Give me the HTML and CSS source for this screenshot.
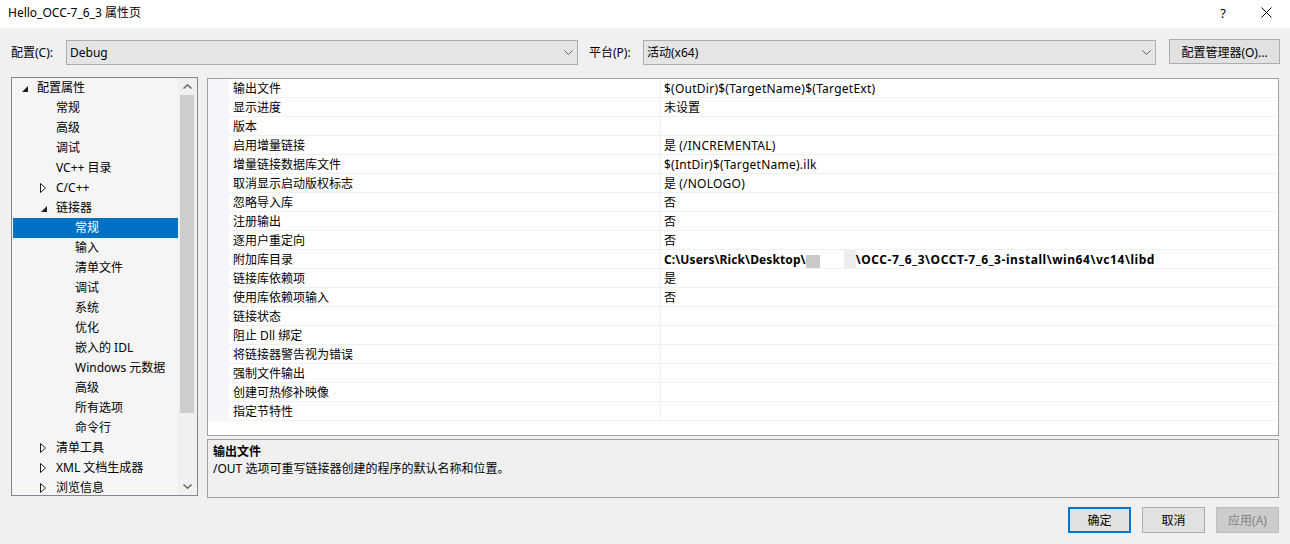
FILE: index.html
```html
<!DOCTYPE html>
<html lang="zh-CN">
<head>
<meta charset="utf-8">
<title>Hello_OCC-7_6_3 属性页</title>
<link rel="stylesheet" href="styles.css">
</head>
<body>
<div class="titlebar">
  <span class="title">Hello_OCC-7_6_3 属性页</span>
  <span class="tb-help">?</span>
  <svg class="tb-close" width="11" height="11" viewBox="0 0 11 11"><path d="M0.5 0.5 L10.5 10.5 M10.5 0.5 L0.5 10.5" stroke="#000" stroke-width="1" fill="none"/></svg>
</div>

<div class="toolbar">
  <span class="lbl lbl1">配置(C):</span>
  <div class="combo combo1"><span>Debug</span><svg class="chev" width="9" height="5" viewBox="0 0 9 5"><path d="M0.5 0.5 L4.5 4.5 L8.5 0.5" stroke="#606060" fill="none"/></svg></div>
  <span class="lbl lbl2">平台(P):</span>
  <div class="combo combo2"><span>活动(x64)</span><svg class="chev" width="9" height="5" viewBox="0 0 9 5"><path d="M0.5 0.5 L4.5 4.5 L8.5 0.5" stroke="#606060" fill="none"/></svg></div>
  <button class="btn cfgmgr">配置管理器(O)...</button>
</div>

<div class="main">
  <div class="tree">
    <div class="tree-list">
      <div class="node l0"><span class="tw"><svg width="6" height="6" viewBox="0 0 6 6"><polygon points="6,0 6,6 0,6" fill="#1e1e1e"/></svg></span>配置属性</div>
      <div class="node l1"><span class="tw"></span>常规</div>
      <div class="node l1"><span class="tw"></span>高级</div>
      <div class="node l1"><span class="tw"></span>调试</div>
      <div class="node l1"><span class="tw"></span>VC++ 目录</div>
      <div class="node l1"><span class="tw"><svg class="col" width="6" height="10" viewBox="0 0 6 10"><polygon points="0.5,0.5 5.5,5 0.5,9.5" fill="#fff" stroke="#1e1e1e"/></svg></span>C/C++</div>
      <div class="node l1"><span class="tw"><svg width="6" height="6" viewBox="0 0 6 6"><polygon points="6,0 6,6 0,6" fill="#1e1e1e"/></svg></span>链接器</div>
      <div class="node l2 sel"><span class="tw"></span>常规</div>
      <div class="node l2"><span class="tw"></span>输入</div>
      <div class="node l2"><span class="tw"></span>清单文件</div>
      <div class="node l2"><span class="tw"></span>调试</div>
      <div class="node l2"><span class="tw"></span>系统</div>
      <div class="node l2"><span class="tw"></span>优化</div>
      <div class="node l2"><span class="tw"></span>嵌入的 IDL</div>
      <div class="node l2"><span class="tw"></span>Windows 元数据</div>
      <div class="node l2"><span class="tw"></span>高级</div>
      <div class="node l2"><span class="tw"></span>所有选项</div>
      <div class="node l2"><span class="tw"></span>命令行</div>
      <div class="node l1"><span class="tw"><svg class="col" width="6" height="10" viewBox="0 0 6 10"><polygon points="0.5,0.5 5.5,5 0.5,9.5" fill="#fff" stroke="#1e1e1e"/></svg></span>清单工具</div>
      <div class="node l1"><span class="tw"><svg class="col" width="6" height="10" viewBox="0 0 6 10"><polygon points="0.5,0.5 5.5,5 0.5,9.5" fill="#fff" stroke="#1e1e1e"/></svg></span>XML 文档生成器</div>
      <div class="node l1"><span class="tw"><svg class="col" width="6" height="10" viewBox="0 0 6 10"><polygon points="0.5,0.5 5.5,5 0.5,9.5" fill="#fff" stroke="#1e1e1e"/></svg></span>浏览信息</div>
    </div>
    <div class="vscroll">
      <div class="sb-arrow"><svg width="9" height="5" viewBox="0 0 9 5"><path d="M0.5 4.5 L4.5 0.8 L8.5 4.5" stroke="#606060" stroke-width="1.4" fill="none"/></svg></div>
      <div class="sb-track"><div class="sb-thumb"></div></div>
      <div class="sb-arrow"><svg width="9" height="5" viewBox="0 0 9 5"><path d="M0.5 0.5 L4.5 4.2 L8.5 0.5" stroke="#606060" stroke-width="1.4" fill="none"/></svg></div>
    </div>
  </div>

  <div class="right">
    <div class="grid">
      <div class="prow"><span class="gut"></span><span class="pname">输出文件</span><span class="pval"><span class="lat">$(OutDir)$(TargetName)$(TargetExt)</span></span></div>
      <div class="prow"><span class="gut"></span><span class="pname">显示进度</span><span class="pval">未设置</span></div>
      <div class="prow"><span class="gut"></span><span class="pname">版本</span><span class="pval"></span></div>
      <div class="prow"><span class="gut"></span><span class="pname">启用增量链接</span><span class="pval">是&nbsp;<span class="lat">(/INCREMENTAL)</span></span></div>
      <div class="prow"><span class="gut"></span><span class="pname">增量链接数据库文件</span><span class="pval"><span class="lat">$(IntDir)$(TargetName).ilk</span></span></div>
      <div class="prow"><span class="gut"></span><span class="pname">取消显示启动版权标志</span><span class="pval">是&nbsp;<span class="lat">(/NOLOGO)</span></span></div>
      <div class="prow"><span class="gut"></span><span class="pname">忽略导入库</span><span class="pval">否</span></div>
      <div class="prow"><span class="gut"></span><span class="pname">注册输出</span><span class="pval">否</span></div>
      <div class="prow"><span class="gut"></span><span class="pname">逐用户重定向</span><span class="pval">否</span></div>
      <div class="prow"><span class="gut"></span><span class="pname">附加库目录</span><span class="pval bold"><span class="bl1">C:\Users\Rick\Desktop\</span><span class="blur1"></span><span class="blurgap"></span><span class="blur2"></span><span class="bl2">\OCC-7_6_3\OCCT-7_6_3-install\win64\vc14\libd</span></span></div>
      <div class="prow"><span class="gut"></span><span class="pname">链接库依赖项</span><span class="pval">是</span></div>
      <div class="prow"><span class="gut"></span><span class="pname">使用库依赖项输入</span><span class="pval">否</span></div>
      <div class="prow"><span class="gut"></span><span class="pname">链接状态</span><span class="pval"></span></div>
      <div class="prow"><span class="gut"></span><span class="pname">阻止 Dll 绑定</span><span class="pval"></span></div>
      <div class="prow"><span class="gut"></span><span class="pname">将链接器警告视为错误</span><span class="pval"></span></div>
      <div class="prow"><span class="gut"></span><span class="pname">强制文件输出</span><span class="pval"></span></div>
      <div class="prow"><span class="gut"></span><span class="pname">创建可热修补映像</span><span class="pval"></span></div>
      <div class="prow"><span class="gut"></span><span class="pname">指定节特性</span><span class="pval"></span></div>
    </div>
    <div class="desc">
      <div class="desc-title">输出文件</div>
      <div class="desc-text">/OUT 选项可重写链接器创建的程序的默认名称和位置。</div>
    </div>
  </div>
</div>

<div class="buttons">
  <button class="btn dlg default">确定</button>
  <button class="btn dlg">取消</button>
  <button class="btn dlg disabled">应用(A)</button>
</div>
</body>
</html>
```

FILE: styles.css
```css
html, body {
  margin: 0;
  padding: 0;
}
body {
  width: 1290px;
  height: 544px;
  overflow: hidden;
  background: #f0f0f0;
  color: #000;
  font-family: "Noto Sans", "Noto Sans CJK SC", sans-serif;
  font-size: 12px;
  line-height: 16px;
}

/* title bar */
.titlebar {
  height: 28px;
  background: #fff;
  display: flex;
  align-items: center;
  padding-left: 8px;
  padding-right: 18px;
  box-sizing: border-box;
}
.title {
  flex: 1;
  font-size: 12px;
  margin-top: -2px;
}
.tb-help {
  font-size: 13px;
  margin-right: 35px;
  margin-top: -3px;
}
.tb-close {
  margin-top: -3px;
}

/* toolbar */
.toolbar {
  display: flex;
  align-items: flex-start;
  margin-top: 11px;
  padding-left: 11px;
  height: 26px;
}
.lbl {
  height: 25px;
  line-height: 25px;
  margin-top: 1px;
}
.lbl1 { width: 55px; }
.lbl2 { width: 54px; margin-left: 11px; }
.combo {
  box-sizing: border-box;
  height: 25px;
  margin-top: 1px;
  background: #e5e5e5;
  border: 1px solid #adadad;
  display: flex;
  align-items: center;
  padding-left: 3px;
  padding-right: 4px;
}
.combo span { flex: 1; }
.combo1 { width: 512px; }
.combo2 { width: 513px; }
.chev { display: block; }

.btn {
  font-family: inherit;
  font-size: 12px;
  color: #000;
  background: #e1e1e1;
  border: 1px solid #adadad;
  box-sizing: border-box;
  padding: 0;
  margin: 0;
}
.cfgmgr {
  width: 111px;
  height: 25px;
  margin-left: 13px;
}

/* main */
.main {
  display: flex;
  margin-top: 12px;
  padding-left: 11px;
  height: 421px;
}
.tree {
  width: 187px;
  height: 419px;
  box-sizing: border-box;
  border: 1px solid #828790;
  background: #f5f5f5;
  display: flex;
  overflow: hidden;
}
.tree-list {
  width: 166px;
  overflow: hidden;
}
.node {
  height: 20px;
  line-height: 20px;
  display: flex;
  align-items: center;
  white-space: nowrap;
  margin-left: 1px;
}
.node.l0 { padding-left: 5px; }
.node.l1 { padding-left: 24px; }
.node.l2 { padding-left: 43px; }
.node.sel {
  background: #0072c6;
  color: #fff;
}
.tw {
  width: 19px;
  height: 20px;
  display: flex;
  align-items: center;
  flex: none;
}
.tw svg { margin-left: 4px; margin-top: 1px; display: block; }
.tw svg.col { margin-left: 3px; margin-top: 0; }

.vscroll {
  width: 19px;
  display: flex;
  flex-direction: column;
  background: #f0f0f0;
}
.sb-arrow {
  height: 17px;
  display: flex;
  align-items: center;
  justify-content: center;
}
.sb-track {
  flex: 1;
  position: relative;
}
.sb-thumb {
  margin: 0 3px 0 2px;
  height: 318px;
  background: #cdcdcd;
}

.right {
  display: flex;
  flex-direction: column;
  gap: 3px;
  margin-left: 9px;
  margin-top: 1px;
  width: 1072px;
}
.grid {
  height: 358px;
  box-sizing: border-box;
  border: 1px solid #a0a0a0;
  background: #fff;
}
.prow {
  display: flex;
  height: 19px;
}
.gut {
  width: 21px;
  background: #f4f6f9;
  flex: none;
}
.pname {
  width: 427px;
  padding-left: 4px;
  height: 18px;
  line-height: 19px;
  border-bottom: 1px solid #eef0f4;
  white-space: nowrap;
  flex: none;
}
.pval {
  flex: 1;
  border-left: 1px solid #eef0f4;
  border-bottom: 1px solid #eef0f4;
  padding-left: 3px;
  height: 18px;
  line-height: 19px;
  white-space: nowrap;
  display: flex;
  align-items: center;
}
.lat { letter-spacing: 0.25px; }
.pval.bold { font-weight: bold; }
.bl1 { letter-spacing: 0.1px; }
.bl2 { letter-spacing: 0.55px; }
.blur1 {
  display: inline-block;
  width: 14px;
  height: 13px;
  background: #c9c9c9;
  margin-top: 5px;
}
.blurgap {
  display: inline-block;
  width: 24px;
}
.blur2 {
  display: inline-block;
  width: 12px;
  height: 18px;
  background: #ededed;
}

.desc {
  height: 59px;
  box-sizing: border-box;
  border: 1px solid #a0a0a0;
  background: #f0f0f0;
  padding: 3px 5px;
}
.desc-title {
  font-weight: bold;
  line-height: 17px;
}
.desc-text {
  line-height: 17px;
}

/* dialog buttons */
.buttons {
  display: flex;
  justify-content: flex-end;
  gap: 11px;
  margin-top: 9px;
  padding-right: 11px;
}
.dlg {
  width: 63px;
  height: 26px;
}
.dlg.default {
  border: 2px solid #0078d7;
}
.dlg.disabled {
  background: #cccccc;
  border-color: #bfbfbf;
  color: #838383;
}
```
